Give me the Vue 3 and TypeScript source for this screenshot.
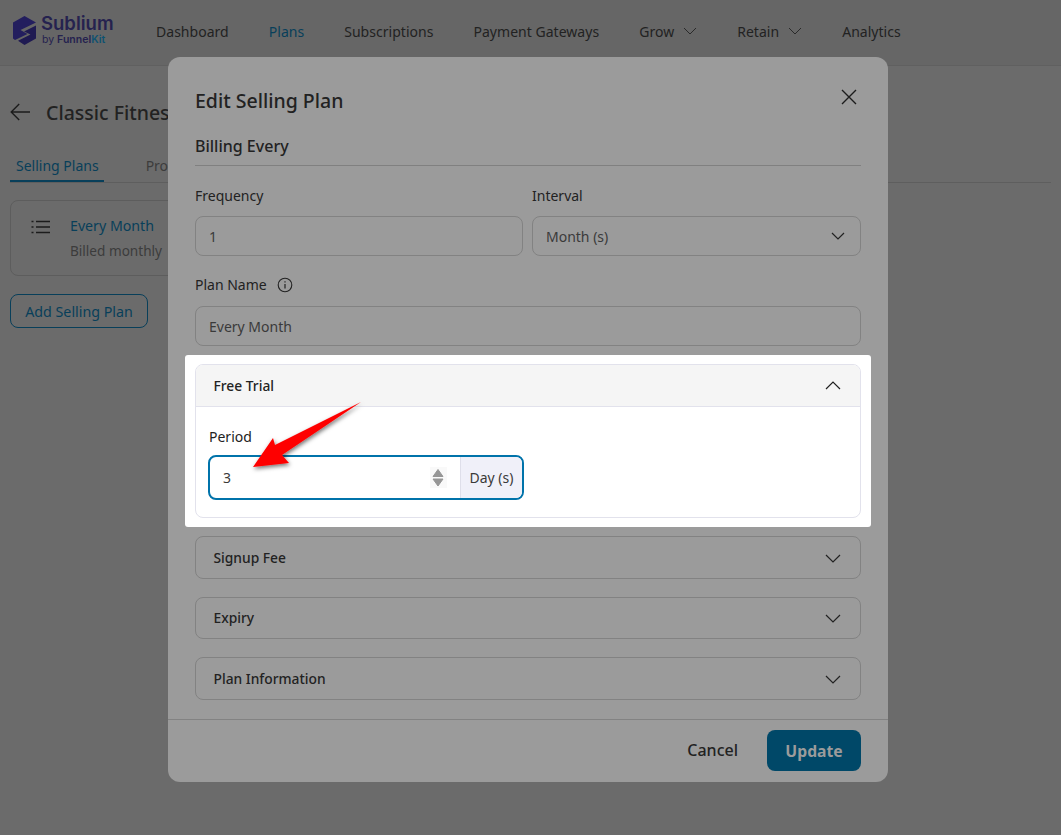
<script setup lang="ts">
const navItems = [
  { label: 'Dashboard' },
  { label: 'Plans', active: true },
  { label: 'Subscriptions' },
  { label: 'Payment Gateways' },
  { label: 'Grow', caret: true },
  { label: 'Retain', caret: true },
  { label: 'Analytics' },
]
const closedSections = ['Signup Fee', 'Expiry', 'Plan Information']
</script>

<template>
  <div class="page">
    <header class="topbar">
      <div class="logo">
        <svg class="logo-mark" width="23" height="29" viewBox="0 0 23 29">
          <path d="M11.5 0 23 6.5 7.5 14 14.5 18 2 24 0 22.5V6.5Z" fill="#231e5e" />
          <path d="M23 9.5 11 15.5 17.5 18.5 5 24.8 11.5 29 23 22.5Z" fill="#1f1a52" />
        </svg>
        <div class="logo-text">
          <div class="logo-name">Sublium</div>
          <div class="logo-by">by <b>Funnel<i>Kit</i></b></div>
        </div>
      </div>
      <nav class="nav">
        <span v-for="item in navItems" :key="item.label" class="nav-item" :class="{ active: item.active }">
          {{ item.label }}
          <svg v-if="item.caret" width="14" height="8" viewBox="0 0 14 8">
            <path d="M1 1l6 6 6-6" fill="none" stroke="#2a2a2a" stroke-width="1" />
          </svg>
        </span>
      </nav>
    </header>

    <main class="content">
      <div class="title-row">
        <svg width="20" height="18" viewBox="0 0 20 18">
          <path d="M20 9H1.2M9.2 1 1.2 9l8 8" fill="none" stroke="#1c1c1c" stroke-width="1.4" />
        </svg>
        <h1>Classic Fitness Program</h1>
      </div>
      <div class="tabs">
        <span class="tab active">Selling Plans</span>
        <span class="tab">Products</span>
      </div>
      <div class="plan-card">
        <svg width="20" height="14" viewBox="0 0 20 14">
          <path d="M5 1.5h14M5 7h14M5 12.5h14M0.5 1.5h2M0.5 7h2M0.5 12.5h2" stroke="#1c1c1c" stroke-width="1.5" fill="none" />
        </svg>
        <div>
          <div class="plan-name">Every Month</div>
          <div class="plan-sub">Billed monthly</div>
        </div>
      </div>
      <button class="add-btn">Add Selling Plan</button>
    </main>

    <section class="modal">
      <div class="modal-head">
        <h2>Edit Selling Plan</h2>
        <svg width="16" height="16" viewBox="0 0 16 16" class="close">
          <path d="M1 1l14 14M15 1 1 15" stroke="#1c1c1c" stroke-width="1.4" fill="none" />
        </svg>
      </div>
      <div class="modal-body">
        <h3 class="billing">Billing Every</h3>
        <div class="two-col">
          <div>
            <div class="label">Frequency</div>
            <div class="field">1</div>
          </div>
          <div>
            <div class="label">Interval</div>
            <div class="field select">
              Month (s)
              <svg width="14" height="8" viewBox="0 0 14 8">
                <path d="M1 1l6 6 6-6" fill="none" stroke="#222" stroke-width="1.2" />
              </svg>
            </div>
          </div>
        </div>
        <div class="label name-label">
          Plan Name
          <svg width="16" height="16" viewBox="0 0 16 16">
            <circle cx="8" cy="8" r="6.8" fill="none" stroke="#222" stroke-width="1.1" />
            <path d="M8 7v4.5M8 4.2v1.4" stroke="#222" stroke-width="1.2" />
          </svg>
        </div>
        <div class="field">Every Month</div>

        <div class="spotlight">
          <div class="trial">
            <div class="trial-head">
              Free Trial
              <svg width="16" height="9" viewBox="0 0 16 9">
                <path d="M1 8l7-7 7 7" fill="none" stroke="#222" stroke-width="1.2" />
              </svg>
            </div>
            <div class="trial-body">
              <div class="label period-label">Period</div>
              <div class="period">
                <span class="period-value">3</span>
                <svg class="spinner" width="17" height="21" viewBox="0 0 17 21">
                  <path d="M8 2.5 13 9.5H3zM8 19 13 12H3z" fill="#969696" stroke="#969696" stroke-linejoin="round" />
                </svg>
                <span class="period-unit">Day (s)</span>
              </div>
            </div>
          </div>
        </div>

        <div v-for="section in closedSections" :key="section" class="acc">
          {{ section }}
          <svg width="16" height="9" viewBox="0 0 16 9">
            <path d="M1 1l7 7 7-7" fill="none" stroke="#222" stroke-width="1.2" />
          </svg>
        </div>
      </div>
      <footer class="modal-foot">
        <span class="cancel">Cancel</span>
        <button class="update">Update</button>
      </footer>
    </section>

    <svg class="arrow" width="120" height="80" viewBox="0 0 120 80">
      <defs>
        <filter id="arrowShadow" x="-20%" y="-20%" width="140%" height="150%">
          <feDropShadow dx="1" dy="2" stdDeviation="2.2" flood-color="#000" flood-opacity="0.55" />
        </filter>
      </defs>
      <path d="M111 2 25 45 23 38 3 67 39 63 32 55Z" fill="#fe0000" filter="url(#arrowShadow)" />
    </svg>
  </div>
</template>

<style>
html, body { margin: 0; background: #6b6b6b; }
</style>

<style scoped>
.page {
  position: relative;
  width: 1061px;
  height: 835px;
  overflow: hidden;
  background: #6b6b6b;
  font-family: "Noto Sans", "Open Sans", sans-serif;
  font-size: 14px;
  color: #222;
}
.topbar {
  height: 66px;
  box-sizing: border-box;
  background: #666;
  border-bottom: 1px solid #606060;
  display: flex;
  align-items: center;
  padding-left: 13px;
}
.logo { display: flex; align-items: center; gap: 5px; width: 143px; margin-top: -5px; }
.logo-text { font-family: Inter, "Noto Sans", sans-serif; color: #25224f; }
.logo-name { font-size: 18.5px; font-weight: 600; line-height: 19px; }
.logo-by { font-size: 10.5px; line-height: 13px; padding-left: 1px; }
.logo-by b { font-weight: 600; }
.logo-by i { font-style: normal; color: #0e5272; }
.nav { display: flex; gap: 40px; letter-spacing: 0.03px; margin-top: -3px; }
.nav-item { display: flex; align-items: center; gap: 9px; color: #222; }
.nav-item.active { color: #083f5a; }
.content { padding: 0 10px; }
.title-row { display: flex; align-items: center; gap: 16px; height: 30px; margin-top: 31px; }
.title-row h1 { margin: 1px 0 0; font-size: 19.5px; font-weight: 500; color: #222; white-space: nowrap; }
.tabs { display: flex; gap: 37px; height: 31px; margin-top: 24px; border-bottom: 1px solid #5e5e5e; }
.tab { padding: 0 5px; line-height: 30px; color: #3c3c3c; }
.tab.active { color: #083f5a; border-bottom: 2px solid #083f5a; height: 29px; padding: 0 5px 0 6px; }
.plan-card {
  width: 500px;
  height: 76px;
  box-sizing: border-box;
  margin-top: 17px;
  border: 1px solid #5d5d5d;
  border-radius: 8px;
  display: flex;
  gap: 19px;
  padding: 14px 20px;
}
.plan-card > svg { margin-top: 5px; }
.plan-name { color: #083f5a; line-height: 22px; font-size: 14.2px; }
.plan-sub { color: #3c3c3c; line-height: 28px; font-size: 13.6px; }
.add-btn {
  display: block;
  margin-top: 18px;
  width: 138px;
  height: 34px;
  border: 1px solid #083f5a;
  border-radius: 8px;
  background: transparent;
  color: #083f5a;
  font: inherit;
  font-size: 14.25px;
  padding: 0;
}
.modal {
  position: absolute;
  left: 168px;
  top: 57px;
  width: 720px;
  height: 725px;
  background: #9b9b9b;
  border-radius: 12px;
  display: flex;
  flex-direction: column;
}
.modal-head {
  display: flex;
  justify-content: space-between;
  align-items: center;
  padding: 29px 31px 0 27px;
  height: 30px;
}
.modal-head h2 { margin: 0 0 2px; font-size: 19.5px; font-weight: 500; color: #222; }
.close { margin-top: -8px; }
.modal-body { flex: 1; padding: 0 27px; }
.billing {
  margin: 15px 0 0;
  height: 34px;
  line-height: 30px;
  font-size: 16px;
  font-weight: 500;
  color: #222;
  border-bottom: 1px solid #808080;
}
.two-col { display: grid; grid-template-columns: 328px 329px; gap: 9px; margin-top: 20px; }
.label { line-height: 20px; color: #222; margin-bottom: 10px; }
.field {
  height: 40px;
  box-sizing: border-box;
  border: 1px solid #828282;
  border-radius: 8px;
  padding: 0 13px;
  display: flex;
  align-items: center;
  color: #3a3a3a;
}
.select { justify-content: space-between; padding-right: 15px; }
.name-label { display: flex; align-items: center; gap: 10px; margin-top: 19px; margin-bottom: 11px; }
.spotlight {
  margin: 9px -10px 9px;
  height: 172px;
  box-sizing: border-box;
  padding: 9px 10px;
  background: #fff;
  border-radius: 3px;
}
.trial { height: 154px; box-sizing: border-box; border: 1px solid #e2e2ec; border-radius: 8px; overflow: hidden; }
.trial-head {
  height: 41px;
  box-sizing: content-box;
  background: #f5f5f5;
  border-bottom: 1px solid #e2e2ec;
  display: flex;
  align-items: center;
  justify-content: space-between;
  padding: 0 19px 0 17.5px;
  font-weight: 500;
  font-size: 13.8px;
  color: #222;
}
.trial-body { padding: 20px 12px 0; }
.period-label { margin-bottom: 8px; padding-left: 1px; }
.period {
  width: 316px;
  height: 45px;
  box-sizing: border-box;
  border: 2px solid #0073aa;
  border-radius: 8px;
  display: flex;
  align-items: center;
  overflow: hidden;
  color: #3a3a3a;
}
.period-value { flex: 1; padding-left: 13px; }
.spinner { background: #f9f9f9; margin-right: 13px; }
.period-unit {
  width: 62px;
  box-sizing: border-box;
  align-self: stretch;
  display: flex;
  align-items: center;
  justify-content: center;
  background: #f0f0f9;
  border-left: 1px solid #dfdfea;
}
.acc {
  height: 42.5px;
  margin-bottom: 18px;
  box-sizing: border-box;
  border: 1px solid #828282;
  border-radius: 8px;
  display: flex;
  align-items: center;
  justify-content: space-between;
  padding: 0 19px 0 17.5px;
  font-weight: 500;
  font-size: 13.8px;
  color: #222;
}
.acc svg { margin-top: 2px; }
.modal-foot {
  height: 63px;
  box-sizing: border-box;
  border-top: 1px solid #828282;
  padding: 10px 27px 0;
  display: flex;
  justify-content: flex-end;
  align-items: flex-start;
  gap: 29px;
}
.cancel { font-size: 16px; font-weight: 500; line-height: 41px; color: #222; }
.update {
  width: 94px;
  height: 41px;
  border: 0;
  border-radius: 8px;
  background: #004868;
  color: #9b9b9b;
  font: inherit;
  font-size: 15.7px;
  font-weight: 700;
  padding: 0;
}
.arrow { position: absolute; left: 250px; top: 400px; }
</style>
